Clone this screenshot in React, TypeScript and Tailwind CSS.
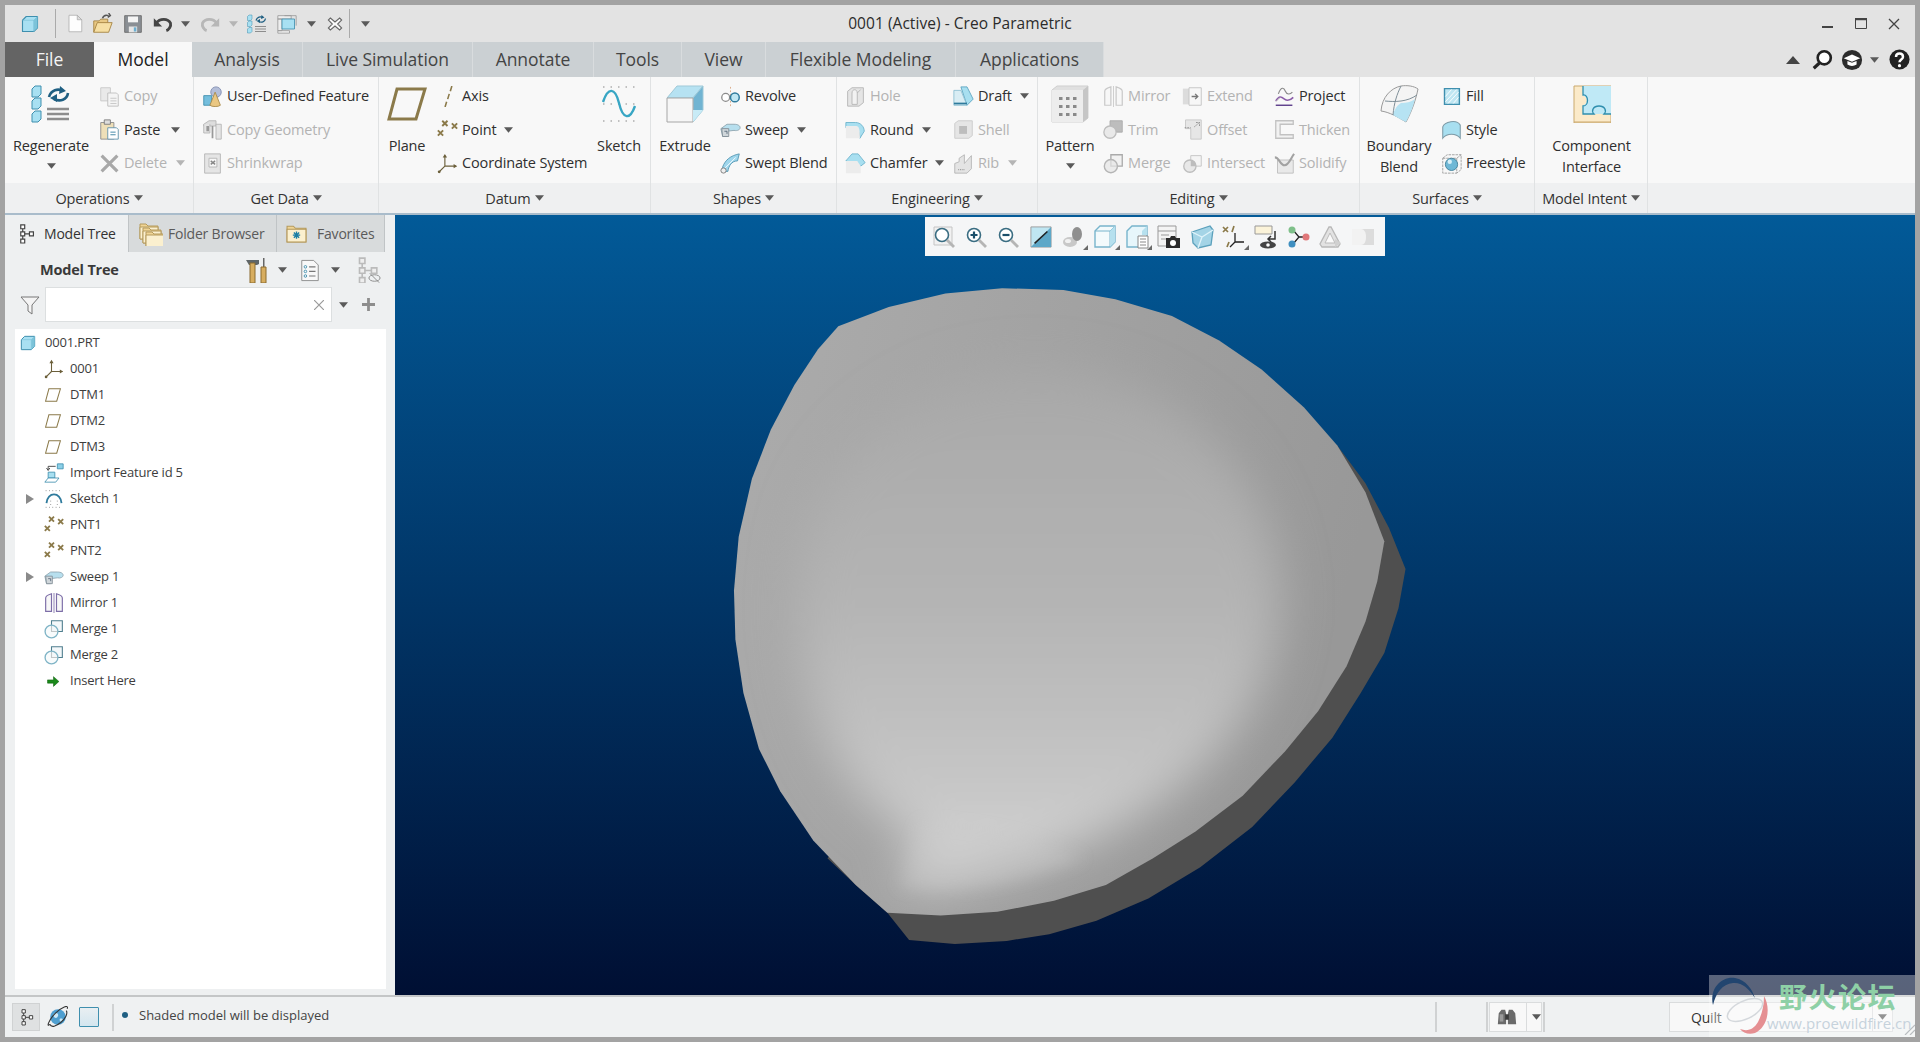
import React from "react";

type P = { className?: string };
const S = ({ className, children, vb = "0 0 24 24" }: { className?: string; children: React.ReactNode; vb?: string }) => (
  <svg viewBox={vb} className={"shrink-0 " + (className || "w-[21px] h-[21px]")} fill="none">{children}</svg>
);

const Caret = ({ className = "", dim = false }: { className?: string; dim?: boolean }) => (
  <svg viewBox="0 0 10 6" className={"w-[9px] h-[6px] shrink-0 " + className}>
    <path d="M0 0h10L5 6z" fill={dim ? "#b5b5b5" : "#5a5a5a"} />
  </svg>
);

const B = "#a8e0f2", BS = "#3f8fae", G = "#c9c9c9", GS = "#b4b4b4", T = "#8b7a4a";

const CubeIc = ({ className }: P) => (
  <S className={className}>
    <path d="M2 7 7 2h15v15l-5 5H2z" fill={B} stroke={BS} strokeWidth="1.5" strokeLinejoin="round" />
    <path d="M17 7v15M17 7H2M17 7l5-5" stroke="#7cc3d9" strokeWidth="1" />
    <path d="M17 7l5-5v15l-5 5z" fill="#7cc3d9" />
  </S>
);
const NewDoc = ({ className }: P) => (
  <S className={className}>
    <path d="M4 1h11l6 6v16H4z" fill="#fdfdfd" stroke="#aaa" />
    <path d="M15 1v6h6z" fill="#ddd" stroke="#aaa" />
  </S>
);
const OpenF = ({ className }: P) => (
  <S className={className}>
    <path d="M2 22V9h6l2-2h8v4" fill="#e8c884" stroke="#a3813f" />
    <path d="M2 22l4-11h17l-4 11z" fill="#f6dfa4" stroke="#a3813f" />
    <path d="M12 6c1-3 4-4 7-3M19 0l2 3-3 2" stroke="#555" strokeWidth="1.6" />
  </S>
);
const Save = ({ className }: P) => (
  <S className={className}>
    <path d="M2 2h20v20H2z" fill="#8a8f94" stroke="#666" />
    <path d="M6 3h12v7H6z" fill="#f4f4f4" />
    <path d="M7 15h10v7H7z" fill="#e5e5e5" />
    <path d="M13 16h3v5h-3z" fill="#6aaed0" />
  </S>
);
const Undo = ({ className, c = "#444" }: P & { c?: string }) => (
  <S className={className}>
    <path d="M4 11c4-6 14-6 17 0 1 4-2 8-5 9" stroke={c} strokeWidth="3.4" />
    <path d="M1 5v10h10z" fill={c} />
  </S>
);
const Redo = ({ className }: P) => (
  <S className={className}>
    <path d="M20 11c-4-6-14-6-17 0-1 4 2 8 5 9" stroke="#b7b7b7" strokeWidth="3.4" />
    <path d="M23 5v10H13z" fill="#b7b7b7" />
  </S>
);
const RegenIc = ({ className }: P) => (
  <svg viewBox="0 0 40 38" className={"shrink-0 " + (className || "")} fill="none">
    {[1, 13, 26].map((y) => (
      <path key={y} d={`M1 ${y + 3}l3-3h6v8l-3 3H1z`} fill={B} stroke={BS} />
    ))}
    <path d="M18 12c2-7 9-9 14-6M37 8c-1 7-8 9-14 6" stroke="#1f5f82" strokeWidth="2.6" />
    <path d="M29 1l6 5-7 3zM26 17l-7-4 7-4z" fill="#1f5f82" />
    <path d="M16 24h22M16 29h22M16 34h22" stroke="#8d8d8d" strokeWidth="2.4" />
  </svg>
);
const Windows = ({ className }: P) => (
  <S className={className}>
    <path d="M1 2h16v4H1zM1 6h5v14H1zM1 20h14v3H1z" fill="#eee" stroke="#999" />
    <path d="M6 6h15v12H6z" fill={B} stroke={BS} />
    <path d="M9 2h14v12" stroke="#999" />
  </S>
);
const CloseX = ({ className }: P) => (
  <S className={className}>
    <path d="M5 3l7 6 7-6 3 3-6 6 6 6-3 3-7-6-7 6-3-3 6-6-6-6z" fill="#fafafa" stroke="#666" strokeWidth="1.6" />
  </S>
);
const Copy = ({ className }: P) => (
  <S className={className}>
    <path d="M2 2h11v15H2z" fill="#e9e9e9" stroke="#c7c7c7" />
    <path d="M10 8h10l2 2v13H10z" fill="#f4f4f4" stroke="#bdbdbd" />
    <path d="M13 14h7M13 17h7M13 20h7" stroke="#c4c4c4" />
  </S>
);
const Paste = ({ className }: P) => (
  <S className={className}>
    <path d="M2 4h15v19H2z" fill="#eedfb8" stroke="#8a8a8a" />
    <path d="M6 1h7v5H6z" fill="#ddd" stroke="#777" />
    <path d="M10 10h10l2 2v11H10z" fill="#fff" stroke="#5c8fa8" />
    <path d="M13 15h6M13 18h6" stroke="#2f7b9d" />
  </S>
);
const Delete = ({ className }: P) => (
  <S className={className}>
    <path d="M3 3l18 18M21 3 3 21" stroke="#a8a8a8" strokeWidth="3.6" />
  </S>
);
const Udf = ({ className }: P) => (
  <S className={className}>
    <circle cx="16" cy="7" r="6" fill="#b4bed8" stroke="#7f8bb0" />
    <path d="M2 11h9v11H2z" fill="#74bedd" stroke="#3f8fae" />
    <path d="M15 7l-6 15c2 2 10 2 12 0z" fill="#eac782" stroke="#a88a4c" />
  </S>
);
const CopyGeom = ({ className }: P) => (
  <S className={className}>
    <path d="M2 6l6-4h8v6L2 8z" fill="#ddd" stroke={GS} />
    <path d="M2 6v10h7V6M16 6v17h6V6z" fill="#e4e4e4" stroke={GS} />
    <path d="M5 8h3v6H5z" fill="#999" />
    <path d="M12 8v14" stroke="#999" strokeWidth="2" />
  </S>
);
const Shrink = ({ className }: P) => (
  <S className={className}>
    <path d="M3 1h18v22H3z" fill="#e5e5e5" stroke={GS} />
    <path d="M8 6h9v10H8z" fill="#f7f7f7" stroke={GS} />
    <path d="M10 9l5 4M15 9l-5 4" stroke="#888" strokeWidth="1.6" />
  </S>
);
const Plane = ({ className, w = 3 }: P & { w?: number }) => (
  <S className={className} vb="0 0 40 34">
    <path d="M10 2h28l-9 30H2z" stroke={T} strokeWidth={w} fill="none" />
  </S>
);
const Axis = ({ className }: P) => (
  <S className={className}>
    <path d="M17 0l-1.800 6M14 9l-1.800 6M11 18 9.200 24" stroke={T} strokeWidth="1.800" />
  </S>
);
const Points = ({ className }: P) => (
  <S className={className}>
    <g stroke={T} strokeWidth="2.200">
      <path d="M6 2l6 6M12 2 6 8M17 5l6 6M23 5l-6 6M1 13l6 6M7 13l-6 6" />
    </g>
  </S>
);
const Coord = ({ className }: P) => (
  <S className={className}>
    <path d="M9 15V3M9 15h13M9 15l-7 7" stroke="#6b5f3a" strokeWidth="1.300" />
    <path d="M9 1l-2.500 4h5zM23 15l-4-2.500v5z" fill="#6b5f3a" />
    <circle cx="2.500" cy="21.500" r="1.600" fill="#6b5f3a" />
  </S>
);
const SketchIc = ({ className }: P) => (
  <S className={className} vb="0 0 36 38">
    <path d="M2 2h32M2 19h32M2 36h32" stroke="#888" strokeWidth="1.200" strokeDasharray="1.500 6" />
    <path d="M2 17C7 2 14 2 18 18c4 17 11 17 16 3" stroke="#38a6c4" strokeWidth="2.400" />
  </S>
);
const Extrude = ({ className }: P) => (
  <svg viewBox="0 0 38 38" className={"shrink-0 " + (className || "")} fill="none">
    <path d="M11 1h26L27 13H1z" fill="#b6e2f2" stroke="#9fc9d8" />
    <path d="M37 1v24L27 37V13z" fill="#71b4d2" stroke="#9fc9d8" />
    <path d="M1 13h26v24H1z" fill="#f6f6f6" stroke="#a6a6a6" />
    <path d="M27 25l10 0-10 12z" fill="#c8ebf6" />
  </svg>
);
const Revolve = ({ className }: P) => (
  <S className={className}>
    <path d="M12 1v22" stroke="#d9a57f" strokeWidth="1" strokeDasharray="2 2" />
    <circle cx="6.500" cy="13" r="4.500" fill="#fff" stroke="#8b8b8b" strokeWidth="1.500" />
    <circle cx="17" cy="13" r="5" fill="#bfe6f2" stroke="#2f7b9d" strokeWidth="1.700" />
  </S>
);
const Sweep = ({ className }: P) => (
  <S className={className}>
    <path d="M1 11l7-5h8c5 0 7 2 7 4s-3 4-7 3l-8 1v6H3z" fill="#b7dfee" stroke="#8ea4ae" />
    <path d="M2 11h8v9H3z" fill="#cfd6da" stroke="#7f8c94" />
    <path d="M5 14h3v3" stroke="#567" />
  </S>
);
const SweptBlend = ({ className }: P) => (
  <S className={className}>
    <path d="M3 16C6 8 12 3 22 1l-2 8c-7 0-10 6-11 12H4z" fill="#9fd6ec" stroke="#4f94b0" />
    <circle cx="4" cy="20" r="3" fill="#eee" stroke="#777" />
    <path d="M6 17 18 5" stroke="#fff" strokeWidth="1" />
  </S>
);
const Hole = ({ className }: P) => (
  <S className={className}>
    <path d="M3 6l5-4h13v17l-5 4H3z" fill="#e5e5e5" stroke={GS} />
    <path d="M8 8c0-5 6-5 6 0v13H8zM14 8l4-4" fill="#f2f2f2" stroke={GS} />
  </S>
);
const Round = ({ className }: P) => (
  <S className={className}>
    <path d="M1 4h11c6 0 10 5 10 10l-5 8c0-7-3-12-9-12H1z" fill="#a8dff0" stroke="#6cb2cc" />
    <path d="M1 8h12c3 0 4 4 4 14H1z" fill="#ececec" />
  </S>
);
const Chamfer = ({ className }: P) => (
  <S className={className}>
    <path d="M1 9 8 1h7l8 10-5 4z" fill="#a8dff0" stroke="#6cb2cc" />
    <path d="M1 9h13l4 6v8H1z" fill="#ececec" />
  </S>
);
const Draft = ({ className }: P) => (
  <S className={className}>
    <path d="M9 1h7l7 14-7 7z" fill="#a8dff0" stroke="#5aa3c0" />
    <path d="M1 5h8l7 17H1z" fill="#d9edf4" stroke="#8bbfd2" />
    <path d="M1 20h15" stroke="#2f7b9d" strokeWidth="2" />
  </S>
);
const Shell = ({ className }: P) => (
  <S className={className}>
    <path d="M2 5l4-3h16v17l-4 3H2z" fill="#e5e5e5" stroke={G} />
    <path d="M7 8h9v9H7z" fill="#bdbdbd" />
  </S>
);
const Rib = ({ className }: P) => (
  <S className={className}>
    <path d="M2 12l5-2V6l6-4v10l8-9v15l-5 5H2z" fill="#e4e4e4" stroke={GS} />
    <path d="M6 19h7" stroke="#999" strokeWidth="1.500" strokeDasharray="1 1" />
  </S>
);
const Pattern = ({ className }: P) => (
  <svg viewBox="0 0 38 38" className={"shrink-0 " + (className || "")} fill="none">
    <path d="M1 5 6 1h31v32l-5 4H1z" fill="#e0e0e0" stroke="#cfcfcf" />
    <path d="M32 5l5-4v32l-5 4z" fill="#c6c6c6" />
    <path d="M1 5h31v32H1z" fill="#ededed" />
    <g fill="#8a8a8a">
      {[12, 20, 28].map((y) =>
        [8, 15, 22].map((x) => <rect key={x + "-" + y} x={x} y={y} width="3.500" height="3" />)
      )}
    </g>
  </svg>
);
const Mirror = ({ className, c = "#c9c9c9" }: P & { c?: string }) => (
  <S className={className}>
    <path d="M2 22V6c0-3 4-4 7-5v21zM22 22V6c0-3-4-4-7-5v21z" stroke={c} strokeWidth="1.400" fill="#f7f7f7" />
    <path d="M12 0v24" stroke={c} strokeWidth="1" />
  </S>
);
const Trim = ({ className }: P) => (
  <S className={className}>
    <path d="M8 2h14v13H15A7 7 0 0 0 8 8z" fill="#bdbdbd" stroke="#aaa" />
    <circle cx="8" cy="15" r="7" fill="#e9e9e9" stroke="#bdbdbd" strokeWidth="1.500" />
  </S>
);
const MergeG = ({ className }: P) => (
  <S className={className}>
    <path d="M9 2h13v13H9z" fill="#f1f1f1" stroke="#aaa" strokeWidth="1.500" />
    <circle cx="9" cy="15" r="7.500" fill="#e6e6e6" fillOpacity=".7" stroke="#b5b5b5" strokeWidth="1.600" />
  </S>
);
const Extend = ({ className }: P) => (
  <S className={className}>
    <path d="M1 3h8v18H1z" fill="#dcdcdc" />
    <path d="M8 2h14v20H8z" fill="#f7f7f7" stroke="#c2c2c2" />
    <path d="M11 12h6M15 9l3 3-3 3" stroke="#777" strokeWidth="1.600" />
  </S>
);
const Offset = ({ className }: P) => (
  <S className={className}>
    <path d="M4 1h18v22H10V11H4z" fill="#e6e6e6" stroke="#c6c6c6" />
    <path d="M3 10h7M14 9l6-5M16 4h4v4" stroke="#8a8a8a" strokeDasharray="2 1" />
  </S>
);
const Intersect = ({ className }: P) => (
  <S className={className}>
    <path d="M10 3h12v12H10z" fill="#f4f4f4" stroke="#c2c2c2" />
    <circle cx="9" cy="15" r="7" fill="#e8e8e8" stroke="#bdbdbd" strokeWidth="1.500" />
    <path d="M10 8a7 7 0 0 1 6 7h-6z" fill="#bdbdbd" />
  </S>
);
const Project = ({ className }: P) => (
  <S className={className}>
    <path d="M5 9c3-8 6-8 8-3s6 3 8 1" stroke="#8a8a8a" strokeWidth="1.300" />
    <path d="M2 17c4-6 6-5 10-2s7 1 10-2" stroke="#8a5ca8" strokeWidth="1.800" />
    <path d="M2 22h19" stroke="#5a3a88" strokeWidth="1.600" />
    <path d="M2 18l5-5" stroke="#bbb" />
  </S>
);
const Thicken = ({ className }: P) => (
  <S className={className}>
    <path d="M2 2h20v4H7v12h15v4H2z" fill="#f2f2f2" stroke="#c2c2c2" strokeWidth="1.500" />
  </S>
);
const Solidify = ({ className }: P) => (
  <S className={className}>
    <path d="M4 8h18v15H4z" fill="#e9e9e9" stroke="#bdbdbd" />
    <path d="M1 5c5 0 6 9 11 9s7-8 11-13" stroke="#a2a2a2" strokeWidth="2.400" />
  </S>
);
const Boundary = ({ className }: P) => (
  <svg viewBox="0 0 40 38" className={"shrink-0 " + (className || "")} fill="none">
    <path d="M2 26C3 12 12 3 22 1c6-1 13 0 17 3-2 10-6 22-12 33-8-5-17-10-25-11z" fill="#f4f4f4" stroke="#9a9a9a" />
    <path d="M22 18c5 0 10-1 14-4-2 8-5 16-9 23-5-2-9-5-13-7 1-4 3-9 8-12z" fill="#b6e3f3" />
    <path d="M22 1c-4 8-7 17-8 29M6 16c10 1 22 1 32-6" stroke="#7f8f98" />
  </svg>
);
const Fill = ({ className }: P) => (
  <S className={className}>
    <path d="M4 3h17v18H4z" fill="#bfe6f2" stroke="#3f8fae" strokeWidth="1.600" />
    <path d="M5 12l7-8M5 18 18 4M8 20 20 7M14 20l6-7" stroke="#fff" />
  </S>
);
const Style = ({ className }: P) => (
  <S className={className}>
    <path d="M2 22V9C4 3 18 0 22 7v15c-5-6-15-6-20 0z" fill="#a8dff0" stroke="#7e9aa6" strokeWidth="1.200" />
  </S>
);
const Freestyle = ({ className }: P) => (
  <S className={className}>
    <path d="M2 6h16v17H2zM2 6l5-4h16v17l-5 4M18 6l5-4" stroke="#999" strokeDasharray="3 1" />
    <circle cx="12" cy="13" r="7" fill="#6fb8d6" stroke="#3f7e98" />
    <circle cx="10" cy="10" r="2.500" fill="#d8f0f8" />
  </S>
);
const CompI = ({ className }: P) => (
  <svg viewBox="0 0 38 38" className={"shrink-0 " + (className || "")} fill="none">
    <path d="M1 1h37v37H1z" fill="#fbeac9" stroke="#caa96e" />
    <path d="M10 1h28v28H10V20c5 0 5-9 0-9z" fill="#bfe9f6" />
    <path d="M10 1v9c6-1 6 11 0 11v8h11c-3-3-1-8 5-8s8 5 5 8h7" stroke="#2f8fae" strokeWidth="1.300" />
    <path d="M1 37h37" stroke="#caa96e" />
  </svg>
);

const Search = ({ className }: P) => (
  <S className={className}>
    <circle cx="14" cy="10" r="7.500" stroke="#222" strokeWidth="3" fill="#fff" />
    <path d="M8.500 16 2 22" stroke="#222" strokeWidth="3.600" />
  </S>
);
const Cap = ({ className }: P) => (
  <S className={className}>
    <circle cx="12" cy="12" r="11" fill="#2c2c2c" />
    <path d="M3 10l9-4 9 4-9 4z" fill="#fff" />
    <path d="M7 13v4c3 2 7 2 10 0v-4l-5 2z" fill="#fff" />
  </S>
);
const Help = ({ className }: P) => (
  <S className={className}>
    <circle cx="12" cy="12" r="11.500" fill="#222" />
    <path d="M8 9c0-5 8-5 8 0 0 3-4 3-4 6" stroke="#fff" strokeWidth="2.800" />
    <circle cx="12" cy="19" r="1.800" fill="#fff" />
  </S>
);
const TreeIc = ({ className, eye = false }: P & { eye?: boolean }) => (
  <S className={className}>
    <g stroke={eye ? "#bbb" : "#444"} strokeWidth="1.500" fill={eye ? "#eee" : "#fff"}>
      <path d="M6 1h5v5H6zM6 10h5v5H6zM6 19h5v5H6zM17 10h5v5h-5z" />
      <path d="M8.500 6v4M8.500 15v4M11 12.500h6" />
    </g>
  </S>
);
const FolderIc = ({ x, y, star = false }: { x: number; y: number; star?: boolean }) => (
  <g transform={`translate(${x} ${y})`}>
    <path d="M1 3h6l2 2h10v13H1z" fill="#f0d596" stroke="#b59a5c" />
    <path d="M1 6h18v12H1z" fill="#fbf0cf" stroke="#b59a5c" />
    {star && <path d="M10 8v7M6.500 11.500h7M7.500 9l5 5M12.500 9l-5 5" stroke="#1a7fa5" strokeWidth="1.300" />}
  </g>
);
const Hammer = ({ className }: P) => (
  <svg viewBox="0 0 22 25" className={"shrink-0 " + (className || "")} fill="none">
    <path d="M0 2h13v4l-2 1H3z" fill="#5f6668" />
    <path d="M4 5h5v20H4z" fill="#d7ad5f" stroke="#8a6b2f" />
    <path d="M17 0h1.500v9H17z" fill="#666" />
    <path d="M15 9h5v16h-5z" fill="#d7ad5f" stroke="#8a6b2f" />
  </svg>
);
const DocList = ({ className }: P) => (
  <S className={className}>
    <path d="M3 1h13l5 5v17H3z" fill="#f8f8f8" stroke="#8a8a8a" />
    <path d="M11 8h7M11 13h7M11 18h7" stroke="#777" strokeWidth="1.300" />
    <circle cx="7" cy="8" r="1.400" stroke="#3f8fae" />
    <circle cx="7" cy="13" r="1.400" stroke="#3f8fae" />
    <circle cx="7" cy="18" r="1.400" stroke="#3f8fae" />
  </S>
);
const ImportIc = ({ className }: P) => (
  <S className={className}>
    <path d="M16 1h7v6h-7z" fill="#8cd0e8" stroke={BS} />
    <path d="M5 11h8v7H5z" fill="#a8dff0" stroke={BS} />
    <path d="M5 18h13l-4 5H1z" stroke={BS} fill="#fff" />
    <path d="M14 4H5v4M3 6l2 3 2-3" stroke="#333" />
  </S>
);
const SketchTree = ({ className }: P) => (
  <S className={className}>
    <path d="M2 2h20M2 22h20" stroke="#777" strokeDasharray="1 3" />
    <path d="M3 17c1-14 17-14 18 0" stroke="#2f7b9d" strokeWidth="2.200" />
    <path d="M8 14v8M16 14v8" stroke="#777" strokeDasharray="1 3" />
  </S>
);
const ArrowIc = ({ className }: P) => (
  <S className={className}>
    <path d="M1 9h11V3l10 9-10 9v-6H1z" fill="#1a8a1a" stroke="#0e5e0e" />
  </S>
);
const MergeTree = ({ className }: P) => (
  <S className={className}>
    <path d="M9 2h13v13H9z" fill="#f4f8fa" stroke="#4f7e8e" strokeWidth="1.300" />
    <circle cx="9" cy="15" r="7.700" fill="#f4f8fa" fillOpacity=".6" stroke="#7fb4c6" strokeWidth="1.600" />
    <path d="M9 15V9M9 15h7" stroke="#c5c5c5" />
  </S>
);

/* corner mark on graphics toolbar buttons */
const Corner = () => (
  <svg viewBox="0 0 5 5" className="absolute right-[1px] bottom-[1px] w-[5px] h-[5px]">
    <path d="M5 0v5H0z" fill="#6a6a6a" />
  </svg>
);

/* graphics toolbar */
const Mag = ({ sign, frame }: { sign?: "+" | "-"; frame?: boolean }) => (
  <S className="w-[24px] h-[24px]">
    {frame && <path d="M2 2h18v18H2z" fill="#f1f1f1" stroke="#c5c5c5" />}
    <circle cx="10" cy="10" r="6.500" fill="#fff" stroke="#3a6d82" strokeWidth="1.600" />
    <path d="M15 15l7 7" stroke="#b5b5b5" strokeWidth="2.800" />
    {sign && <path d={sign === "+" ? "M6.500 10h7M10 6.500v7" : "M6.500 10h7"} stroke="#1a4f6a" strokeWidth="2.200" />}
  </S>
);
const TB: [React.ReactNode, boolean][] = [
  [<Mag frame key="0" />, false],
  [<Mag sign="+" key="1" />, false],
  [<Mag sign="-" key="2" />, false],
  [
    <S className="w-[22px] h-[22px]" key="3">
      <path d="M1 1h22v22H1z" fill="#bfe6f2" stroke="#999" />
      <path d="M1 23 23 1v22z" fill="#5ea8c8" />
      <path d="M5 19 19 6" stroke="#222" strokeWidth="1.700" />
    </S>,
    false,
  ],
  [
    <S className="w-[24px] h-[24px]" key="4">
      <ellipse cx="9" cy="17" rx="7" ry="5" fill="#c8c8c8" />
      <ellipse cx="16" cy="9" rx="5" ry="7" fill="#8f8f8f" />
      <ellipse cx="7" cy="16" rx="3" ry="2" fill="#f1f1f1" />
    </S>,
    true,
  ],
  [
    <S className="w-[24px] h-[24px]" key="5">
      <path d="M2 6l5-5h15v16l-5 5H2z" fill="#f3fafc" stroke="#78b4cc" strokeWidth="1.400" />
      <path d="M17 6v16M2 6h15l5-5" stroke="#78b4cc" />
      <path d="M17 6l5-5v16l-5 5z" fill="#b6e0ee" />
    </S>,
    true,
  ],
  [
    <S className="w-[24px] h-[24px]" key="6">
      <path d="M2 6l5-5h15v16l-5 5H2z" fill="#e7f6fb" stroke="#78b4cc" strokeWidth="1.400" />
      <path d="M17 6l5-5v9h-5z" fill="#b6e0ee" />
      <path d="M13 11h10v12H13z" fill="#fff" stroke="#888" />
      <path d="M15 14h6M15 17h6M15 20h6" stroke="#888" />
    </S>,
    true,
  ],
  [
    <S className="w-[24px] h-[24px]" key="7">
      <path d="M1 1h18v20H1z" fill="#f4f4f4" stroke="#999" />
      <path d="M1 6h18M4 10h8M4 14h6" stroke="#999" />
      <path d="M9 13h4l1-2h4l1 2h4v10H9z" fill="#2b2b2b" />
      <circle cx="16" cy="18" r="3" fill="#fff" />
    </S>,
    false,
  ],
  [
    <S className="w-[24px] h-[24px]" key="8">
      <path d="M2 7l18-6 3 4-2 15-13 3-5-5z" fill="#a4d4e6" stroke="#5ca1bc" strokeWidth="1.300" />
      <path d="M2 7l10 5 11-7M12 12l-4 11" stroke="#dff3fa" strokeWidth="1.300" />
    </S>,
    false,
  ],
  [
    <S className="w-[24px] h-[24px]" key="9">
      <path d="M1 2l5 5M6 2 1 7M12 1l-2 6M5 22l2-5" stroke={T} strokeWidth="1.700" />
      <path d="M13 17V8M13 17h9M13 17l-5 5" stroke="#222" strokeWidth="1.300" />
    </S>,
    true,
  ],
  [
    <S className="w-[24px] h-[24px]" key="10">
      <path d="M1 1h17v8H1z" fill="#fbf3d9" stroke="#999" />
      <path d="M21 6v8h-7M17 11l-3 3 3 3" stroke="#333" strokeWidth="1.500" />
      <ellipse cx="14" cy="20" rx="8" ry="3.500" fill="#444" />
      <circle cx="14" cy="20" r="1.800" fill="#fff" />
    </S>,
    false,
  ],
  [
    <S className="w-[24px] h-[24px]" key="11">
      <path d="M7 5l6 7-6 7M13 12h7" stroke="#222" strokeWidth="1.300" />
      <circle cx="6" cy="5" r="3.500" fill="#7fc08a" />
      <circle cx="6" cy="19" r="3.500" fill="#3f8fc0" />
      <circle cx="20" cy="12" r="3.500" fill="#e0787a" />
    </S>,
    false,
  ],
  [
    <S className="w-[24px] h-[24px]" key="12">
      <path d="M11 2h2l9 17-2 3H4l-2-3z" fill="#e2e2e2" stroke="#b8b8b8" strokeWidth="1.300" />
      <path d="M12 8 7 18h10z" fill="#fafafa" stroke="#bbb" />
      <path d="M17 14l6 4-6 4z" fill="#d0d0d0" />
    </S>,
    false,
  ],
  [
    <S className="w-[24px] h-[24px]" key="13">
      <path d="M1 4h22v16H1z" fill="#dcdcdc" />
      <path d="M1 4h9c3 0 5 3 5 8s-2 8-5 8H1z" fill="#f2f2f2" />
    </S>,
    false,
  ],
];

const ICON = "w-[21px] h-[21px]";
const LABEL = "text-[14.500px] leading-[20.500px] tracking-[-0.15px] whitespace-nowrap";

const Small = ({ icon, label, dim, caret, cm = "ml-[8px]" }: { icon: React.ReactNode; label: string; dim?: boolean; caret?: boolean; cm?: string }) => (
  <div className="flex items-center h-[33.5px]">
    <div className="w-[25px] shrink-0">{icon}</div>
    <span className={LABEL + (dim ? " text-[#b3b3b3]" : " text-[#2f2f2f]")}>{label}</span>
    {caret && <Caret className={cm} dim={dim} />}
  </div>
);
const Col = ({ className = "", children }: { className?: string; children: React.ReactNode }) => (
  <div className={"flex flex-col shrink-0 pt-[2.500px] " + className}>{children}</div>
);
const Big = ({ className = "", icon, lines, caret }: { className?: string; icon: React.ReactNode; lines: string[]; caret?: boolean }) => (
  <div className={"flex flex-col items-center shrink-0 pt-[8px] " + className}>
    <div className="h-[38px] flex items-center justify-center">{icon}</div>
    <div className="mt-[13px] flex flex-col items-center">
      {lines.map((l) => (
        <span key={l} className={LABEL + " text-[#2f2f2f]"}>{l}</span>
      ))}
      {caret && <Caret className="mt-[6px]" />}
    </div>
  </div>
);
const Group = ({ className, label, children }: { className: string; label: string; children: React.ReactNode }) => (
  <div className={"flex flex-col shrink-0 border-r border-[#e0e2e3] " + className}>
    <div className="h-[106px] flex">{children}</div>
    <div className="h-[30px] pt-[3px] bg-[#eff0f1] flex items-center justify-center gap-[4px]">
      <span className={LABEL + " text-[#333]"}>{label}</span>
      <Caret className="-mt-[3px]" />
    </div>
  </div>
);

const TABS: [string, string][] = [
  ["Analysis", "w-[111px]"],
  ["Live Simulation", "w-[170px]"],
  ["Annotate", "w-[121px]"],
  ["Tools", "w-[88px]"],
  ["View", "w-[84px]"],
  ["Flexible Modeling", "w-[190px]"],
  ["Applications", "w-[148px]"],
];

const Row = ({ icon, label, arrow, root }: { icon: React.ReactNode; label: string; arrow?: boolean; root?: boolean }) => (
  <div className="flex items-center h-[26px]">
    <div className={root ? "w-[5px] shrink-0" : "w-[11px] shrink-0"} />
    {!root && (
      <div className="w-[18px] shrink-0 flex">
        {arrow && (
          <svg viewBox="0 0 8 10" className="w-[8px] h-[10px]">
            <path d="M0 0l8 5-8 5z" fill="#8a8a8a" />
          </svg>
        )}
      </div>
    )}
    <div className={root ? "w-[25px] shrink-0" : "w-[26px] shrink-0"}>{icon}</div>
    <span className="text-[13px] tracking-[-0.2px] text-[#3d3d3d] whitespace-nowrap">{label}</span>
  </div>
);

const TI = "w-[20px] h-[20px]";

const LIGHT = "293,128 400,85 520,55 640,43 770,47 880,68 1000,105 1100,160 1190,225 1280,310 1350,395 1410,500 1450,610 1435,700 1410,790 1370,890 1310,990 1240,1080 1150,1180 1050,1260 960,1320 860,1380 750,1415 630,1440 510,1448 397,1442 330,1380 240,1280 170,1170 125,1075 92,950 75,830 72,720 82,600 110,470 150,360 200,260 250,180";
const DARK = "1350,395 1410,480 1460,580 1495,672 1480,760 1450,860 1400,950 1340,1050 1260,1150 1170,1250 1060,1340 950,1410 840,1460 740,1490 650,1505 540,1512 443,1503 397,1442 330,1380 270,1320 700,800";

export default function App() {
  return (
    <div className="relative w-screen h-screen overflow-hidden bg-[#a3a3a3] p-[5px] flex flex-col font-['Open_Sans',sans-serif]">
      {/* title bar */}
      <div className="h-[37px] shrink-0 bg-[#e3e3e3] grid grid-cols-[1fr_auto_1fr] items-center">
        <div className="flex items-center">
          <CubeIc className="w-[18px] h-[18px] ml-[16px]" />
          <div className="w-px h-[29px] bg-[#aaa] ml-[16px]" />
          <NewDoc className="w-[18px] h-[21px] ml-[10px]" />
          <OpenF className="w-[21px] h-[21px] ml-[8px]" />
          <Save className="w-[20px] h-[20px] ml-[10px]" />
          <Undo className="w-[20px] h-[20px] ml-[10px]" />
          <Caret className="ml-[8px]" />
          <Redo className="w-[20px] h-[20px] ml-[10px]" />
          <Caret dim className="ml-[9px]" />
          <RegenIc className="w-[20px] h-[20px] ml-[9px]" />
          <Windows className="w-[20px] h-[20px] ml-[10px]" />
          <Caret className="ml-[10px]" />
          <CloseX className="w-[16px] h-[16px] ml-[11px]" />
          <div className="w-px h-[29px] bg-[#aaa] ml-[6px]" />
          <Caret className="ml-[11px]" />
        </div>
        <span className="text-[15.500px] tracking-[0.05px] text-[#2b2b2b] whitespace-nowrap">0001 (Active) - Creo Parametric</span>
        <div className="flex justify-end items-center text-[#444]">
          <svg viewBox="0 0 12 12" className="w-[12px] h-[12px]"><path d="M0 9h11" stroke="#444" strokeWidth="2" /></svg>
          <svg viewBox="0 0 12 12" className="w-[12px] h-[12px] ml-[21px]"><path d="M.5.5h11v10H.5z" fill="none" stroke="#444" /><path d="M0 1h12" stroke="#444" strokeWidth="2.500" /></svg>
          <svg viewBox="0 0 12 12" className="w-[12px] h-[12px] ml-[21px] mr-[15px]"><path d="M1 1l10 10M11 1 1 11" stroke="#444" strokeWidth="1.300" /></svg>
        </div>
      </div>
      {/* tabs */}
      <div className="h-[35px] shrink-0 bg-[#e3e3e3] flex items-stretch">
        <div className="w-[89px] bg-[#646464] text-[#f5f5f5] text-[17.500px] flex items-center justify-center">File</div>
        <div className="w-[98px] bg-[#f8f8f8] text-[#222] text-[17.500px] flex items-center justify-center">Model</div>
        {TABS.map(([t, w]) => (
          <div key={t} className={"bg-[#cbd0d3] text-[#444] text-[17.500px] tracking-[-0.05px] flex items-center justify-center border-r border-[#d9dcde] whitespace-nowrap " + w}>{t}</div>
        ))}
        <div className="ml-auto flex items-center pr-[5px]">
          <svg viewBox="0 0 14 8" className="w-[14px] h-[8px]"><path d="M7 0l7 8H0z" fill="#444" /></svg>
          <Search className="w-[21px] h-[21px] ml-[12px]" />
          <Cap className="w-[22px] h-[22px] ml-[8px]" />
          <Caret className="ml-[7px]" />
          <Help className="w-[21px] h-[21px] ml-[10px]" />
        </div>
      </div>
      {/* ribbon */}
      <div className="h-[136px] shrink-0 bg-[#f8f8f8] flex">
        <Group className="w-[189px]" label="Operations">
          <Big className="w-[74px] ml-[9px]" icon={<RegenIc className="w-[40px] h-[38px]" />} lines={["Regenerate"]} caret />
          <Col className="ml-[11px]">
            <Small icon={<Copy className={ICON} />} label="Copy" dim />
            <Small icon={<Paste className={ICON} />} label="Paste" caret cm="ml-[11px]" />
            <Small icon={<Delete className={ICON} />} label="Delete" dim caret cm="ml-[9px]" />
          </Col>
        </Group>
        <Group className="w-[185px]" label="Get Data">
          <Col className="ml-[8px]">
            <Small icon={<Udf className={ICON} />} label="User-Defined Feature" />
            <Small icon={<CopyGeom className={ICON} />} label="Copy Geometry" dim />
            <Small icon={<Shrink className={ICON} />} label="Shrinkwrap" dim />
          </Col>
        </Group>
        <Group className="w-[272px]" label="Datum">
          <Big className="w-[50px] ml-[3px]" icon={<Plane className="w-[40px] h-[34px]" />} lines={["Plane"]} />
          <Col className="ml-[5px] w-[157px]">
            <Small icon={<Axis className={ICON} />} label="Axis" />
            <Small icon={<Points className={ICON} />} label="Point" caret />
            <Small icon={<Coord className={ICON} />} label="Coordinate System" />
          </Col>
          <Big className="w-[50px]" icon={<SketchIc className="w-[36px] h-[38px]" />} lines={["Sketch"]} />
        </Group>
        <Group className="w-[186px]" label="Shapes">
          <Big className="w-[54px] ml-[7px]" icon={<Extrude className="w-[38px] h-[38px]" />} lines={["Extrude"]} />
          <Col className="ml-[8px]">
            <Small icon={<Revolve className={ICON} />} label="Revolve" />
            <Small icon={<Sweep className={ICON} />} label="Sweep" caret />
            <Small icon={<SweptBlend className={ICON} />} label="Swept Blend" />
          </Col>
        </Group>
        <Group className="w-[201px]" label="Engineering">
          <Col className="ml-[8px] w-[108px]">
            <Small icon={<Hole className={ICON} />} label="Hole" dim />
            <Small icon={<Round className={ICON} />} label="Round" caret cm="ml-[8px]" />
            <Small icon={<Chamfer className={ICON} />} label="Chamfer" caret cm="ml-[8px]" />
          </Col>
          <Col>
            <Small icon={<Draft className={ICON} />} label="Draft" caret cm="ml-[8px]" />
            <Small icon={<Shell className={ICON} />} label="Shell" dim />
            <Small icon={<Rib className={ICON} />} label="Rib" dim caret cm="ml-[9px]" />
          </Col>
        </Group>
        <Group className="w-[322px]" label="Editing">
          <Big className="w-[60px] ml-[2px]" icon={<Pattern className="w-[38px] h-[38px]" />} lines={["Pattern"]} caret />
          <Col className="ml-[3px] w-[79px]">
            <Small icon={<Mirror className={ICON} />} label="Mirror" dim />
            <Small icon={<Trim className={ICON} />} label="Trim" dim />
            <Small icon={<MergeG className={ICON} />} label="Merge" dim />
          </Col>
          <Col className="w-[92px]">
            <Small icon={<Extend className={ICON} />} label="Extend" dim />
            <Small icon={<Offset className={ICON} />} label="Offset" dim />
            <Small icon={<Intersect className={ICON} />} label="Intersect" dim />
          </Col>
          <Col>
            <Small icon={<Project className={ICON} />} label="Project" />
            <Small icon={<Thicken className={ICON} />} label="Thicken" dim />
            <Small icon={<Solidify className={ICON} />} label="Solidify" dim />
          </Col>
        </Group>
        <Group className="w-[175px]" label="Surfaces">
          <Big className="w-[66px] ml-[6px]" icon={<Boundary className="w-[40px] h-[38px]" />} lines={["Boundary", "Blend"]} />
          <Col className="ml-[9px]">
            <Small icon={<Fill className={ICON} />} label="Fill" />
            <Small icon={<Style className={ICON} />} label="Style" />
            <Small icon={<Freestyle className={ICON} />} label="Freestyle" />
          </Col>
        </Group>
        <Group className="w-[113px]" label="Model Intent">
          <Big className="w-[113px]" icon={<CompI className="w-[38px] h-[38px]" />} lines={["Component", "Interface"]} />
        </Group>
        <div className="flex-1 flex flex-col">
          <div className="h-[106px]" />
          <div className="h-[30px] bg-[#eff0f1]" />
        </div>
      </div>
      <div className="h-[2px] shrink-0 bg-[#a9bccb]" />
      {/* main */}
      <div className="flex-1 flex min-h-0">
        <div className="w-[390px] shrink-0 bg-[#eef0f1] flex flex-col">
          <div className="h-[37px] shrink-0 flex text-[14px] tracking-[-0.2px]">
            <div className="w-[123px] flex items-center bg-[#eef0f1] text-[#333]">
              <TreeIc className="w-[19px] h-[25px] ml-[11px]" />
              <span className="ml-[9px]">Model Tree</span>
            </div>
            <div className="w-[149px] flex items-center bg-[#d8dbdc] border-l border-r border-[#c0c4c6] text-[#5a5a5a]">
              <svg viewBox="0 0 24 24" className="w-[24px] h-[24px] ml-[10px]">
                <FolderIc x={0} y={-1} />
                <FolderIc x={3} y={3} />
                <FolderIc x={6} y={7} />
              </svg>
              <span className="ml-[5px]">Folder Browser</span>
            </div>
            <div className="w-[108px] flex items-center bg-[#d8dbdc] border-r border-[#c0c4c6] text-[#5a5a5a]">
              <svg viewBox="0 0 20 20" className="w-[21px] h-[21px] ml-[9px]"><FolderIc x={0} y={0} star /></svg>
              <span className="ml-[10px]">Favorites</span>
            </div>
            <div className="w-[10px] bg-[#eef0f1]" />
          </div>
          <div className="h-[35px] pt-[1px] shrink-0 flex items-center">
            <span className="ml-[35px] w-[206px] text-[14.500px] font-bold text-[#3a3a3a] tracking-[-0.2px]">Model Tree</span>
            <Hammer className="w-[22px] h-[25px]" />
            <Caret className="ml-[10px]" />
            <DocList className="w-[22px] h-[25px] ml-[12px]" />
            <Caret className="ml-[10px]" />
            <div className="relative ml-[13px]">
              <TreeIc eye className="w-[26px] h-[26px]" />
              <svg viewBox="0 0 14 10" className="absolute right-[-2px] bottom-[0px] w-[13px] h-[10px]">
                <ellipse cx="7" cy="5" rx="6" ry="3.500" fill="none" stroke="#888" />
                <path d="M2 0l10 10" stroke="#888" />
              </svg>
            </div>
          </div>
          <div className="h-[35px] shrink-0 flex items-center">
            <svg viewBox="0 0 20 20" className="w-[20px] h-[20px] ml-[15px]">
              <path d="M1 2h18l-7 8v9l-4-3v-6z" fill="#f4f4f4" stroke="#777" />
            </svg>
            <div className="w-[287px] h-[35px] ml-[5px] bg-white border border-[#dcdfe0] flex items-center justify-end pr-[7px]">
              <svg viewBox="0 0 10 10" className="w-[10px] h-[10px]"><path d="M0 0l10 10M10 0 0 10" stroke="#9a9a9a" strokeWidth="1.200" /></svg>
            </div>
            <Caret className="ml-[7px]" />
            <svg viewBox="0 0 14 14" className="w-[13px] h-[13px] ml-[14px]"><path d="M5.500 0h3v5.500H14v3H8.500V14h-3V8.500H0v-3h5.500z" fill="#8d8d8d" /></svg>
          </div>
          <div className="mt-[7px] ml-[10px] w-[371px] flex-1 bg-white pt-[1px] mb-[6px]">
            <Row root icon={<CubeIc className="w-[16px] h-[16px]" />} label="0001.PRT" />
            <Row icon={<Coord className={TI} />} label="0001" />
            <Row icon={<Plane w={2.500} className="w-[18px] h-[14px]" />} label="DTM1" />
            <Row icon={<Plane w={2.500} className="w-[18px] h-[14px]" />} label="DTM2" />
            <Row icon={<Plane w={2.500} className="w-[18px] h-[14px]" />} label="DTM3" />
            <Row icon={<ImportIc className={TI} />} label="Import Feature id 5" />
            <Row arrow icon={<SketchTree className={TI} />} label="Sketch 1" />
            <Row icon={<Points className={TI} />} label="PNT1" />
            <Row icon={<Points className={TI} />} label="PNT2" />
            <Row arrow icon={<Sweep className={TI} />} label="Sweep 1" />
            <Row icon={<Mirror c="#7d6ea8" className={TI} />} label="Mirror 1" />
            <Row icon={<MergeTree className={TI} />} label="Merge 1" />
            <Row icon={<MergeTree className={TI} />} label="Merge 2" />
            <Row icon={<ArrowIc className="w-[13px] h-[13px] ml-[3px]" />} label="Insert Here" />
          </div>
        </div>
        <div className="relative flex-1 bg-[linear-gradient(180deg,#025a98,#000f33)] overflow-hidden">
          <div className="absolute left-[530px] top-[2px] w-[460px] h-[39px] bg-[#f5f6f7] flex items-center pl-[3px]">
            {TB.map(([t, c], i) => (
              <div key={i} className="relative w-[32.200px] h-[28px] flex items-center justify-center">
                {t}
                {c && <Corner />}
              </div>
            ))}
          </div>
          <svg viewBox="0 0 1568 1568" preserveAspectRatio="none" className="absolute left-[305px] top-[54px] w-[740px] h-[700px]">
            <defs>
              <linearGradient id="lit" x1="0" y1="0" x2="0" y2="1">
                <stop offset="0" stopColor="#a8a8a8" />
                <stop offset="0.45" stopColor="#b4b4b4" />
                <stop offset="0.8" stopColor="#c6c6c6" />
                <stop offset="1" stopColor="#d6d6d6" />
              </linearGradient>
              <linearGradient id="base" x1="0" y1="0" x2="1" y2="0.25">
                <stop offset="0" stopColor="#acacac" />
                <stop offset="0.6" stopColor="#a0a0a0" />
                <stop offset="1" stopColor="#989898" />
              </linearGradient>
              <clipPath id="clip"><polygon points={LIGHT} /></clipPath>
              <filter id="soft" x="-20%" y="-20%" width="140%" height="140%"><feGaussianBlur stdDeviation="50" /></filter>
              <filter id="soft2" x="-20%" y="-20%" width="140%" height="140%"><feGaussianBlur stdDeviation="16" /></filter>
            </defs>
            <polygon points={DARK} fill="#4f4f4f" />
            <polygon points={LIGHT} fill="url(#base)" />
            <g clipPath="url(#clip)">
              <path d="M690 220C1010 210 1260 490 1225 800c-40 270-260 440-520 530-100 30-210 60-270 55L450 1260C280 1190 170 900 220 620 260 390 470 230 690 220z" fill="url(#lit)" filter="url(#soft)" />
              <path d="M470 1240 425 1385C560 1400 700 1370 810 1320 700 1270 570 1245 470 1240z" fill="#c9c9c9" fillOpacity=".35" filter="url(#soft2)" />
            </g>
          </svg>
        </div>
      </div>
      {/* status bar */}
      <div className="h-[42px] shrink-0 bg-[#eff1f2] border-t-2 border-[#c4c6c7] flex items-center">
        <div className="ml-[7px] w-[28px] h-[28px] bg-[#dfe1e2] border border-[#d0d2d3] flex items-center justify-center">
          <TreeIc className="w-[16px] h-[22px]" />
        </div>
        <svg viewBox="0 0 24 24" className="w-[22px] h-[22px] ml-[7px]">
          <circle cx="12" cy="12" r="8.500" fill="#4f9fd0" />
          <path d="M7 9c3-3 6-1 5 2s-5 3-5-2zM14 14c2-1 4 0 3 2s-4 1-3-2z" fill="#cfeaf7" />
          <path d="M3 20C-1 24 2 15 9 8s15-10 13-5" fill="none" stroke="#333" strokeWidth="1.200" />
          <path d="M21 5c2 3-1 9-6 13S5 24 3 20" fill="none" stroke="#333" strokeWidth="1.200" />
        </svg>
        <div className="w-[20px] h-[20px] ml-[10px] border border-[#3f8fae] rounded-[1px] bg-[linear-gradient(180deg,#e9eff2,#d3e6ef)]" />
        <div className="w-[2px] h-[27px] bg-[#d0d2d3] ml-[13px]" />
        <div className="w-[6px] h-[6px] rounded-full bg-[#1f5f82] ml-[8px] -mt-[5px]" />
        <span className="ml-[11px] text-[13px] text-[#444] -mt-[2px]">Shaded model will be displayed</span>
        <div className="ml-auto flex items-center">
          <div className="w-[2px] h-[30px] bg-[#d0d2d3]" />
          <div className="w-[2px] h-[30px] bg-[#d0d2d3] ml-[49px]" />
          <div className="w-[53px] h-[30px] ml-[1px] bg-[#f8f8f8] border border-[#dadcdd] flex items-center">
            <svg viewBox="0 0 24 24" className="w-[22px] h-[22px] ml-[6px]">
              <path d="M3 8l3-4h4l1 4v12H2zM21 8l-3-4h-4l-1 4v12h9z" fill="#6a6a6a" />
              <path d="M10 9h4v6h-4z" fill="#3a3a3a" />
              <path d="M4 9h4v8H4z" fill="#9a9a9a" />
            </svg>
            <div className="w-px h-[28px] bg-[#dadcdd] ml-[8px]" />
            <Caret className="ml-[5px]" />
          </div>
          <div className="w-[2px] h-[30px] bg-[#d0d2d3] ml-[1px]" />
          <div className="w-[224px] h-[30px] ml-[124px] mr-[22px] bg-[#f8f8f8] border border-[#dadcdd] flex items-center">
            <span className="ml-[21px] text-[14px] tracking-[-0.2px] text-[#333]">Quilt</span>
            <div className="ml-auto w-px h-[28px] bg-[#dadcdd] mr-[5px]" />
            <Caret className="mr-[5px]" />
          </div>
        </div>
      </div>
      {/* watermark over the corner */}
      <div className="absolute right-[5px] bottom-[5px] w-[206px] h-[62px] bg-white/35 overflow-hidden">
        <svg viewBox="0 0 70 62" className="absolute left-0 top-0 w-[70px] h-[62px]">
          <path d="M4 30C0 12 14 1 26 3c11 2 17 11 20 20-7-11-14-16-22-15C13 9 7 18 4 30z" fill="#22456f" />
          <path d="M55 21c7 12 4 31-9 37-6 2-12 0-15-4 8 3 14 0 18-7 4-8 6-16 6-26z" fill="#e58f92" />
          <ellipse cx="36" cy="35" rx="19" ry="9" transform="rotate(-25 36 35)" fill="none" stroke="#d4d8dc" strokeWidth="1.500" />
        </svg>
        <div className="absolute left-[70px] top-[6px] text-[28px] leading-[30px] font-bold tracking-[1.500px] text-[#8ed0a6] whitespace-nowrap font-['Noto_Sans_CJK_SC',sans-serif]">野火论坛</div>
        <div className="absolute left-[58px] top-[38px] text-[15px] leading-[20px] tracking-[0.05px] text-[#c6d2dc] whitespace-nowrap">www.proewildfire.cn</div>
        <svg viewBox="0 0 12 12" className="absolute right-[0px] bottom-[2px] w-[12px] h-[12px]">
          <path d="M12 2 2 12M12 7l-5 5" stroke="#b9bdc0" strokeWidth="1.200" />
        </svg>
      </div>
    </div>
  );
}
